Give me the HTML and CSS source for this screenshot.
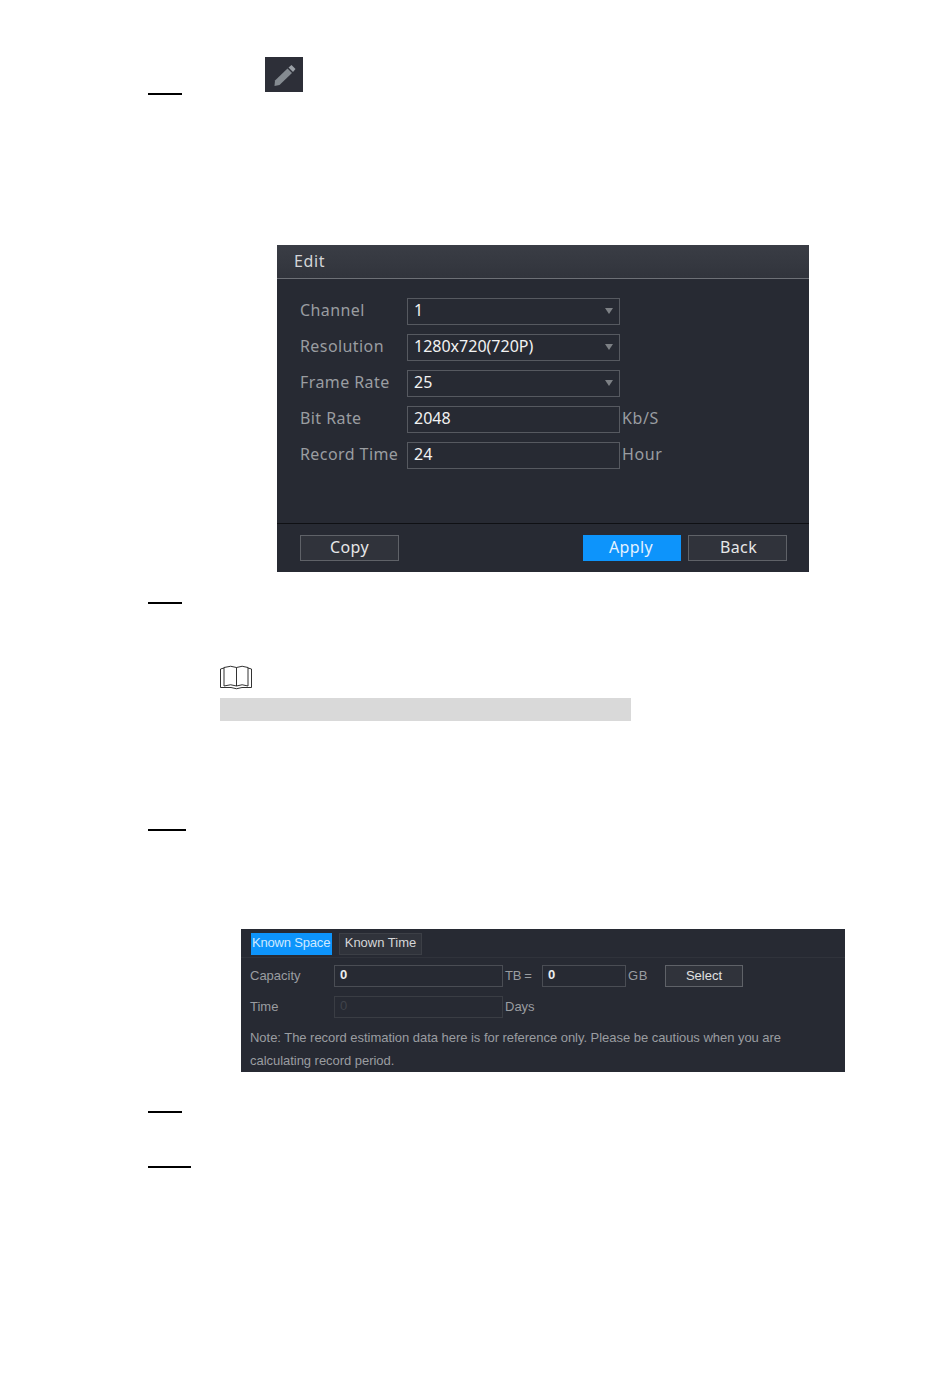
FILE: index.html
```html
<!DOCTYPE html>
<html lang="en">
<head>
<meta charset="utf-8">
<title>Record estimate</title>
<link rel="stylesheet" href="styles.css">
</head>
<body>
<main class="page">
  <section class="step step-one">
    <span class="rule rule-34"></span>
    <span class="edit-icon">
      <svg width="38" height="35" viewBox="0 0 38 35" aria-hidden="true">
        <path d="M10 23.500 L22.500 11.500 L27 16 L14.500 28 L9.500 29 Z" fill="#858b91"/>
        <path d="M23.500 10.500 L26.500 8 L30.500 12 L28 15 Z" fill="#9a9fa5"/>
      </svg>
    </span>
  </section>

  <section class="panel edit-panel">
    <header class="edit-title">Edit</header>
    <div class="edit-body">
      <div class="edit-row"><span class="edit-label">Channel</span><span class="edit-field">1<i class="caret"></i></span></div>
      <div class="edit-row"><span class="edit-label">Resolution</span><span class="edit-field">1280x720(720P)<i class="caret"></i></span></div>
      <div class="edit-row"><span class="edit-label">Frame Rate</span><span class="edit-field">25<i class="caret"></i></span></div>
      <div class="edit-row"><span class="edit-label">Bit Rate</span><span class="edit-field">2048</span><span class="edit-unit">Kb/S</span></div>
      <div class="edit-row"><span class="edit-label">Record Time</span><span class="edit-field">24</span><span class="edit-unit">Hour</span></div>
    </div>
    <footer class="edit-footer">
      <span class="edit-btn">Copy</span>
      <span class="edit-actions">
        <span class="edit-btn edit-btn-primary">Apply</span>
        <span class="edit-btn edit-btn-back">Back</span>
      </span>
    </footer>
  </section>

  <span class="rule rule-34 rule-second"></span>

  <section class="note">
    <svg class="book" width="33" height="25" viewBox="0 0 33 25" aria-hidden="true">
      <path d="M4 3 L0.500 4 V22.500 H11 Q16.500 25 22 22.500 H31.500 V4 L28 3" fill="none" stroke="#1c1c1c" stroke-width=".9"/>
      <path d="M4 21 V2.500 Q11 0 16.500 2.500 Q22 0 28 2.500 V21 M16.500 2.500 V21 M4 21 Q11 18.500 16.500 21 Q22 18.500 28 21" fill="none" stroke="#1c1c1c" stroke-width=".9"/>
    </svg>
    <div class="note-bar"></div>
  </section>

  <span class="rule rule-38 rule-third"></span>

  <section class="panel known-panel">
    <div class="tabs">
      <span class="tab tab-active">Known Space</span>
      <span class="tab">Known Time</span>
    </div>
    <div class="known-row known-row-first">
      <span class="known-label">Capacity</span>
      <span class="known-field known-wide">0</span>
      <span class="known-unit known-tb">TB =</span>
      <span class="known-field known-narrow">0</span>
      <span class="known-unit known-gb">GB</span>
      <span class="known-btn">Select</span>
    </div>
    <div class="known-row">
      <span class="known-label">Time</span>
      <span class="known-field known-wide known-disabled">0</span>
      <span class="known-unit">Days</span>
    </div>
    <p class="known-note">Note: The record estimation data here is for reference only. Please be cautious when you are calculating record period.</p>
  </section>

  <span class="rule rule-34 rule-fourth"></span>
  <span class="rule rule-43 rule-fifth"></span>
</main>
</body>
</html>
```
FILE: styles.css
```css
* { box-sizing: border-box; }
html, body { margin: 0; background: #fff; }
.page { display: flex; flex-direction: column; align-items: flex-start; width: 950px; height: 1387px; padding: 57px 0 0 148px; overflow: hidden; }

.rule { display: block; height: 2px; background: #000; flex: none; }
.rule-34 { width: 34px; }
.rule-38 { width: 38px; }
.rule-43 { width: 43px; }
.rule-second { margin-top: 30px; }
.rule-third { margin-top: 108px; }
.rule-fourth { margin-top: 39px; }
.rule-fifth { margin-top: 53px; }

.step-one { display: flex; align-items: flex-end; height: 38px; }
.edit-icon { display: block; width: 38px; height: 35px; margin: 0 0 3px 83px; background: #2d2f38; }
.edit-icon svg { display: block; }

.panel { background: #272a33; flex: none; }

.edit-panel { display: flex; flex-direction: column; width: 532px; height: 327px; margin: 150px 0 0 129px; font-family: "Noto Sans", sans-serif; font-size: 16px; }
.edit-title { height: 34px; padding: 5px 0 0 17px; line-height: 22px; color: #d3d5d8; background: linear-gradient(#3a3d45, #31343c); border-bottom: 1px solid #6d7076; letter-spacing: .6px; }
.edit-body { flex: 1; display: flex; flex-direction: column; gap: 9px; padding: 19px 0 0 23px; }
.edit-row { display: flex; align-items: center; height: 27px; }
.edit-label { width: 107px; margin-bottom: 4px; color: #9a9da1; letter-spacing: .42px; white-space: nowrap; }
.edit-field { position: relative; display: block; width: 213px; height: 27px; padding-left: 6px; line-height: 23px; color: #f2f2f2; border: 1px solid #565960; }
.edit-unit { margin: 0 0 4px 2px; color: #9a9da1; letter-spacing: .6px; }
.caret { position: absolute; right: 6px; top: 9px; width: 0; height: 0; border: 4px solid transparent; border-top: 6px solid #7d8085; border-bottom: 0; }

.edit-footer { display: flex; justify-content: space-between; height: 49px; padding: 11px 22px 0 23px; border-top: 1px solid #0f1014; }
.edit-actions { display: flex; gap: 7px; }
.edit-btn { display: block; width: 99px; height: 26px; line-height: 22px; text-align: center; color: #e6e7e8; background: #30333b; border: 1px solid #5f6268; letter-spacing: .4px; }
.edit-btn-primary { width: 98px; padding-right: 2px; color: #e4f2ff; background: #0d94fb; border-color: #0d94fb; }
.edit-btn-back { padding-left: 2px; }

.note { display: flex; flex-direction: column; margin: 61px 0 0 72px; }
.book { display: block; }
.note-bar { width: 411px; height: 23px; margin-top: 8px; background: #d9d9d9; }

.known-panel { width: 604px; height: 143px; margin: 98px 0 0 93px; padding: 0 9px; font-family: "Liberation Sans", sans-serif; font-size: 13px; color: #9a9da1; }
.tabs { display: flex; gap: 7px; height: 29px; padding: 4px 0 0 10px; margin: 0 -9px; border-bottom: 1px solid #30333b; }
.tab { display: block; width: 83px; height: 22px; line-height: 18px; text-align: center; color: #d5d6d8; background: #30333b; border: 1px solid #3c3f46; }
.tab-active { width: 81px; color: #cfe9ff; background: #0d94fb; border-color: #0d94fb; white-space: nowrap; letter-spacing: -.18px; padding-right: 2px; }
.known-row { display: flex; align-items: center; height: 22px; margin-top: 9px; }
.known-row-first { margin-top: 7px; }
.known-label { width: 84px; margin-bottom: 2px; }
.known-field { display: block; height: 22px; line-height: 18px; padding-left: 5px; color: #eceded; border: 1px solid #4a4d54; font-weight: 700; }
.known-wide { width: 169px; }
.known-narrow { width: 84px; }
.known-unit { margin: 0 0 2px 2px; }
.known-tb { width: 37px; letter-spacing: -.3px; }
.known-gb { width: 37px; letter-spacing: .6px; }
.known-btn { display: block; width: 78px; height: 22px; line-height: 19px; text-align: center; color: #e0e1e2; background: #30333b; border: 1px solid #5f6268; }
.known-disabled { color: #3f424a; border-color: #3a3d44; font-weight: 400; }
.known-note { margin: 8px 0 0; line-height: 23px; width: 540px; letter-spacing: -.035px; }
```
